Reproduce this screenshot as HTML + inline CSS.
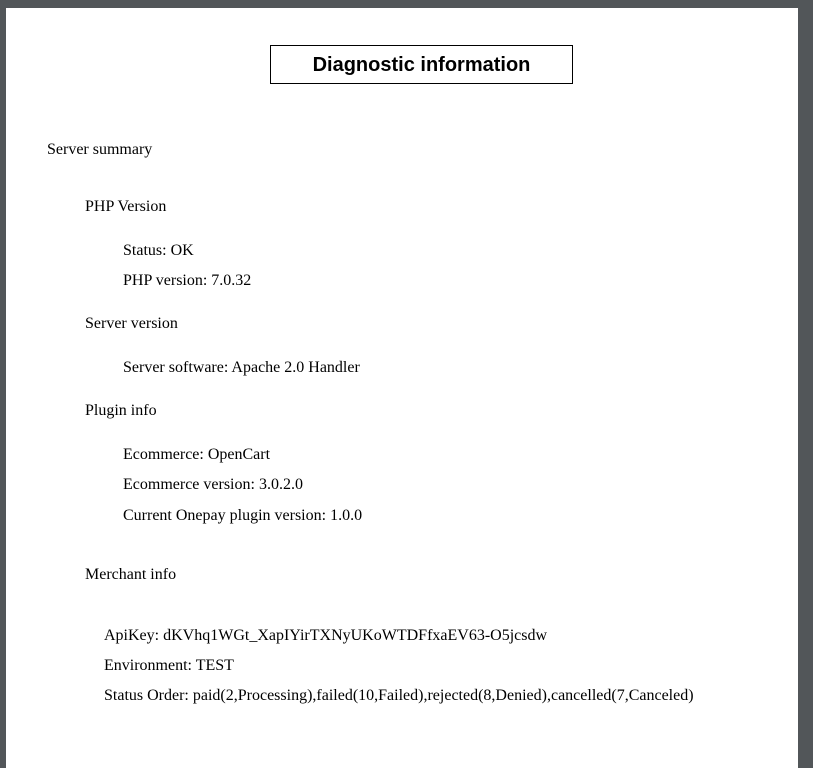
<!DOCTYPE html>
<html><head><style>
html,body{margin:0;padding:0;}
body{width:813px;height:747px;background:#525659;position:relative;overflow:hidden;font-family:"Liberation Serif",serif;font-size:16px;color:#000;}
.page{position:absolute;left:6px;top:8px;width:792px;height:760px;background:#fff;}
.t{position:absolute;white-space:nowrap;line-height:18px;margin-top:1px;}
.box{position:absolute;left:270px;top:45px;width:301px;height:37px;border:1px solid #000;font-family:"Liberation Sans",sans-serif;font-weight:bold;font-size:20px;text-align:center;line-height:38px;}
</style></head><body>
<div class="page"></div>
<div class="box">Diagnostic information</div>
<div class="t" style="left:47px;top:140px">Server summary</div>
<div class="t" style="left:85px;top:197px">PHP Version</div>
<div class="t" style="left:123px;top:241px">Status: OK</div>
<div class="t" style="left:123px;top:271px">PHP version: 7.0.32</div>
<div class="t" style="left:85px;top:314px">Server version</div>
<div class="t" style="left:123px;top:358px">Server software: Apache 2.0 Handler</div>
<div class="t" style="left:85px;top:401px">Plugin info</div>
<div class="t" style="left:123px;top:445px">Ecommerce: OpenCart</div>
<div class="t" style="left:123px;top:475px">Ecommerce version: 3.0.2.0</div>
<div class="t" style="left:123px;top:506px">Current Onepay plugin version: 1.0.0</div>
<div class="t" style="left:85px;top:565px">Merchant info</div>
<div class="t" style="left:104px;top:626px">ApiKey: dKVhq1WGt_XapIYirTXNyUKoWTDFfxaEV63-O5jcsdw</div>
<div class="t" style="left:104px;top:656px">Environment: TEST</div>
<div class="t" style="left:104px;top:686px">Status Order: paid(2,Processing),failed(10,Failed),rejected(8,Denied),cancelled(7,Canceled)</div>
</body></html>
